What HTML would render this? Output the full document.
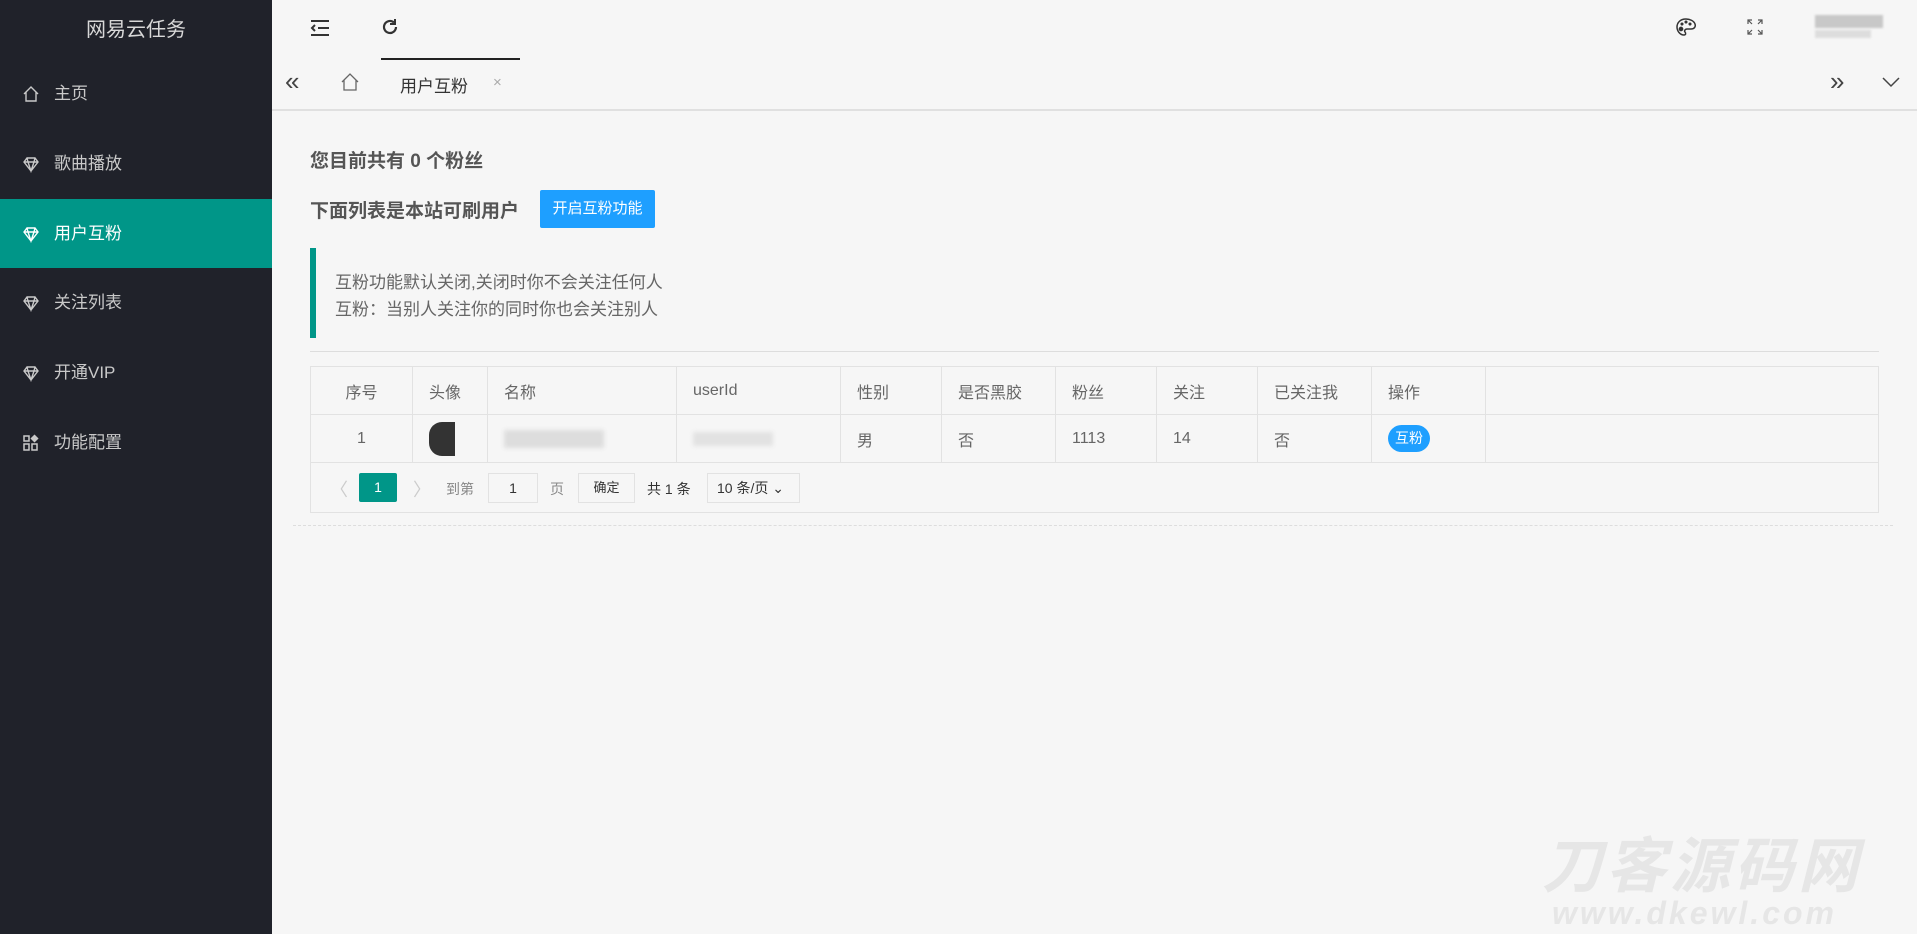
<!DOCTYPE html>
<html><head><meta charset="utf-8"><style>
*{margin:0;padding:0;box-sizing:border-box}
body{width:1917px;height:934px;overflow:hidden;background:#f6f6f6;font-family:"Liberation Sans","Noto Sans CJK SC",sans-serif;color:#555;position:relative}
.side{position:absolute;left:0;top:0;width:272px;height:934px;background:#20222a}
.logo{position:absolute;top:13px;left:0;width:272px;text-align:center;color:#d8d8d8;font-size:20px}
.mi{position:absolute;left:0;width:272px;height:69px;color:#c9c9c9;font-size:17px;line-height:69px;padding-left:54px}
.mi svg{position:absolute;left:22px;top:26px}
.mi.act{background:#009688;color:#fff}
.abs{position:absolute}
.t{position:absolute;white-space:nowrap}
table{position:absolute;left:310px;top:366px;width:1569px;border-collapse:collapse;font-size:16px;color:#666}
td{border:1px solid #e2e2e2;height:48px;padding-left:16px}
</style></head><body>
<div class="side">
<div class="logo">网易云任务</div>
<div class="mi" style="top:59px"><svg width="18" height="18" viewBox="0 0 18 18" fill="none" stroke="#c9c9c9" stroke-width="1.4"><path d="M2 9L9 2l7 7M4 7v9h10V7"/></svg>主页</div>
<div class="mi" style="top:129px"><svg width="18" height="18" viewBox="0 0 18 18" fill="none" stroke="#c9c9c9" stroke-width="1.4"><path d="M2 7l3-4h8l3 4-7 9zM2 7h14M6 7l3 9 3-9M5 3l1 4M13 3l-1 4"/></svg>歌曲播放</div>
<div class="mi act" style="top:199px"><svg width="18" height="18" viewBox="0 0 18 18" fill="none" stroke="#fff" stroke-width="1.4"><path d="M2 7l3-4h8l3 4-7 9zM2 7h14M6 7l3 9 3-9M5 3l1 4M13 3l-1 4"/></svg>用户互粉</div>
<div class="mi" style="top:268px"><svg width="18" height="18" viewBox="0 0 18 18" fill="none" stroke="#c9c9c9" stroke-width="1.4"><path d="M2 7l3-4h8l3 4-7 9zM2 7h14M6 7l3 9 3-9M5 3l1 4M13 3l-1 4"/></svg>关注列表</div>
<div class="mi" style="top:338px"><svg width="18" height="18" viewBox="0 0 18 18" fill="none" stroke="#c9c9c9" stroke-width="1.4"><path d="M2 7l3-4h8l3 4-7 9zM2 7h14M6 7l3 9 3-9M5 3l1 4M13 3l-1 4"/></svg>开通VIP</div>
<div class="mi" style="top:408px"><svg width="18" height="18" viewBox="0 0 18 18" fill="none" stroke="#c9c9c9" stroke-width="1.5"><rect x="2" y="2" width="5" height="5"/><rect x="2" y="10" width="5" height="6"/><rect x="10" y="10" width="5" height="6"/><path d="M12.5 1.5l3 3-3 3-3-3z" fill="#c9c9c9"/></svg>功能配置</div>
</div>
<svg class="abs" style="left:310px;top:19px" width="20" height="18" viewBox="0 0 20 18" fill="none" stroke="#333" stroke-width="2"><path d="M1 2h18M8 9h11M1 16h18M5 6L2 9l3 3"/></svg>
<svg class="abs" style="left:380px;top:17px" width="20" height="20" viewBox="0 0 20 20" fill="none" stroke="#333" stroke-width="2.2"><path d="M16 10a6 6 0 1 1-2-4.5"/><path d="M15 2v5h-5" stroke-width="2"/></svg>
<div class="abs" style="left:381px;top:58px;width:139px;height:2px;background:#222"></div>
<svg class="abs" style="left:1675px;top:17px" width="22" height="20" viewBox="0 0 22 20" fill="none" stroke="#333" stroke-width="1.5"><path d="M11 2C5 2 2 6 2 10s3 8 7 8c2 0 2-2 1-3s0-3 2-3h4c3 0 5-2 4-5-1-3-5-5-9-5z"/><circle cx="6" cy="12" r="1.6" fill="#333"/><circle cx="7" cy="7" r=".8" fill="#333"/><circle cx="11" cy="5" r=".8" fill="#333"/><circle cx="15" cy="7" r=".8" fill="#333"/></svg>
<svg class="abs" style="left:1747px;top:19px" width="16" height="16" viewBox="0 0 16 16" fill="none" stroke="#555" stroke-width="1.2"><path d="M1 5V1h4M1 1l4 4M11 1h4v4M15 1l-4 4M1 11v4h4M1 15l4-4M15 11v4h-4M15 15l-4-4"/></svg>
<div class="abs" style="left:1815px;top:15px;width:68px;height:13px;background:#c8c8c8;filter:blur(1px)"></div>
<div class="abs" style="left:1815px;top:30px;width:56px;height:8px;background:#ddd;filter:blur(1px)"></div>
<div class="t" style="left:285px;top:66px;font-size:26px;color:#444">«</div>
<svg class="abs" style="left:340px;top:72px" width="20" height="20" viewBox="0 0 20 20" fill="none" stroke="#666" stroke-width="1.3"><path d="M2 10L10 2l8 8M4 8v10h12V8"/></svg>
<div class="t" style="left:400px;top:72px;font-size:17px;color:#333">用户互粉</div>
<div class="t" style="left:493px;top:74px;font-size:15px;color:#aaa">×</div>
<div class="t" style="left:1830px;top:66px;font-size:26px;color:#444">»</div>
<svg class="abs" style="left:1882px;top:76px" width="18" height="12" viewBox="0 0 18 12" fill="none" stroke="#444" stroke-width="1.5"><path d="M1 2l8 8 8-8"/></svg>
<div class="abs" style="left:272px;top:109px;width:1645px;height:2px;background:#e0e0e0"></div>
<div class="t" style="left:310px;top:146px;font-size:19px;font-weight:bold;color:#555">您目前共有 0 个粉丝</div>
<div class="t" style="left:310px;top:196px;font-size:19px;font-weight:bold;color:#555">下面列表是本站可刷用户</div>
<div class="abs" style="left:540px;top:190px;width:115px;height:38px;background:#1e9fff;color:#fff;font-size:15px;line-height:38px;text-align:center;border-radius:2px">开启互粉功能</div>
<div class="abs" style="left:310px;top:248px;width:6px;height:90px;background:#009688"></div>
<div class="t" style="left:335px;top:268px;font-size:17px;color:#666">互粉功能默认关闭,关闭时你不会关注任何人</div>
<div class="t" style="left:335px;top:295px;font-size:17px;color:#666">互粉：当别人关注你的同时你也会关注别人</div>
<div class="abs" style="left:310px;top:351px;width:1569px;height:1px;background:#ddd"></div>
<table>
<tr><td style="width:102px;text-align:center;padding:0">序号</td><td style="width:75px">头像</td><td style="width:189px">名称</td><td style="width:164px">userId</td><td style="width:101px">性别</td><td style="width:114px">是否黑胶</td><td style="width:101px">粉丝</td><td style="width:101px">关注</td><td style="width:114px">已关注我</td><td style="width:114px">操作</td><td></td></tr>
<tr><td style="text-align:center;padding:0">1</td><td><div style="width:26px;height:34px;border-radius:13px 0 0 13px;background:#333"></div></td><td><div style="width:100px;height:18px;background:#ddd;filter:blur(2px)"></div></td><td><div style="width:80px;height:14px;background:#e2e2e2;filter:blur(2px)"></div></td><td>男</td><td>否</td><td>1113</td><td>14</td><td>否</td><td><span style="display:inline-block;width:42px;height:27px;border-radius:14px;background:#1e9fff;color:#fff;font-size:14px;line-height:27px;text-align:center">互粉</span></td><td></td></tr>
<tr><td colspan="11" style="height:50px"></td></tr>
</table>
<div class="t" style="left:330px;top:476px;font-size:18px;color:#ccc">〈</div>
<div class="abs" style="left:359px;top:473px;width:38px;height:29px;background:#009688;color:#fff;font-size:14px;line-height:29px;text-align:center;border-radius:2px">1</div>
<div class="t" style="left:413px;top:476px;font-size:18px;color:#ccc">〉</div>
<div class="t" style="left:446px;top:479px;font-size:14px;color:#888">到第</div>
<div class="abs" style="left:488px;top:473px;width:50px;height:30px;border:1px solid #e2e2e2;font-size:14px;line-height:28px;text-align:center;color:#333">1</div>
<div class="t" style="left:550px;top:479px;font-size:14px;color:#888">页</div>
<div class="abs" style="left:578px;top:473px;width:57px;height:30px;border:1px solid #e2e2e2;font-size:13px;line-height:28px;text-align:center;color:#333">确定</div>
<div class="t" style="left:647px;top:479px;font-size:14px;color:#333">共 1 条</div>
<div class="abs" style="left:707px;top:473px;width:93px;height:30px;border:1px solid #e2e2e2;font-size:14px;line-height:28px;padding-left:9px;color:#333">10 条/页 ⌄</div>
<div class="abs" style="left:293px;top:525px;width:1600px;border-top:1px dashed #ddd"></div>
<div class="t" style="left:1542px;top:818px;font-size:60px;font-weight:bold;font-style:italic;color:#e6e6e6;letter-spacing:4px">刀客源码网</div>
<div class="t" style="left:1552px;top:895px;font-size:32px;font-weight:bold;font-style:italic;color:#e6e6e6;letter-spacing:3px">www.dkewl.com</div>
</body></html>
